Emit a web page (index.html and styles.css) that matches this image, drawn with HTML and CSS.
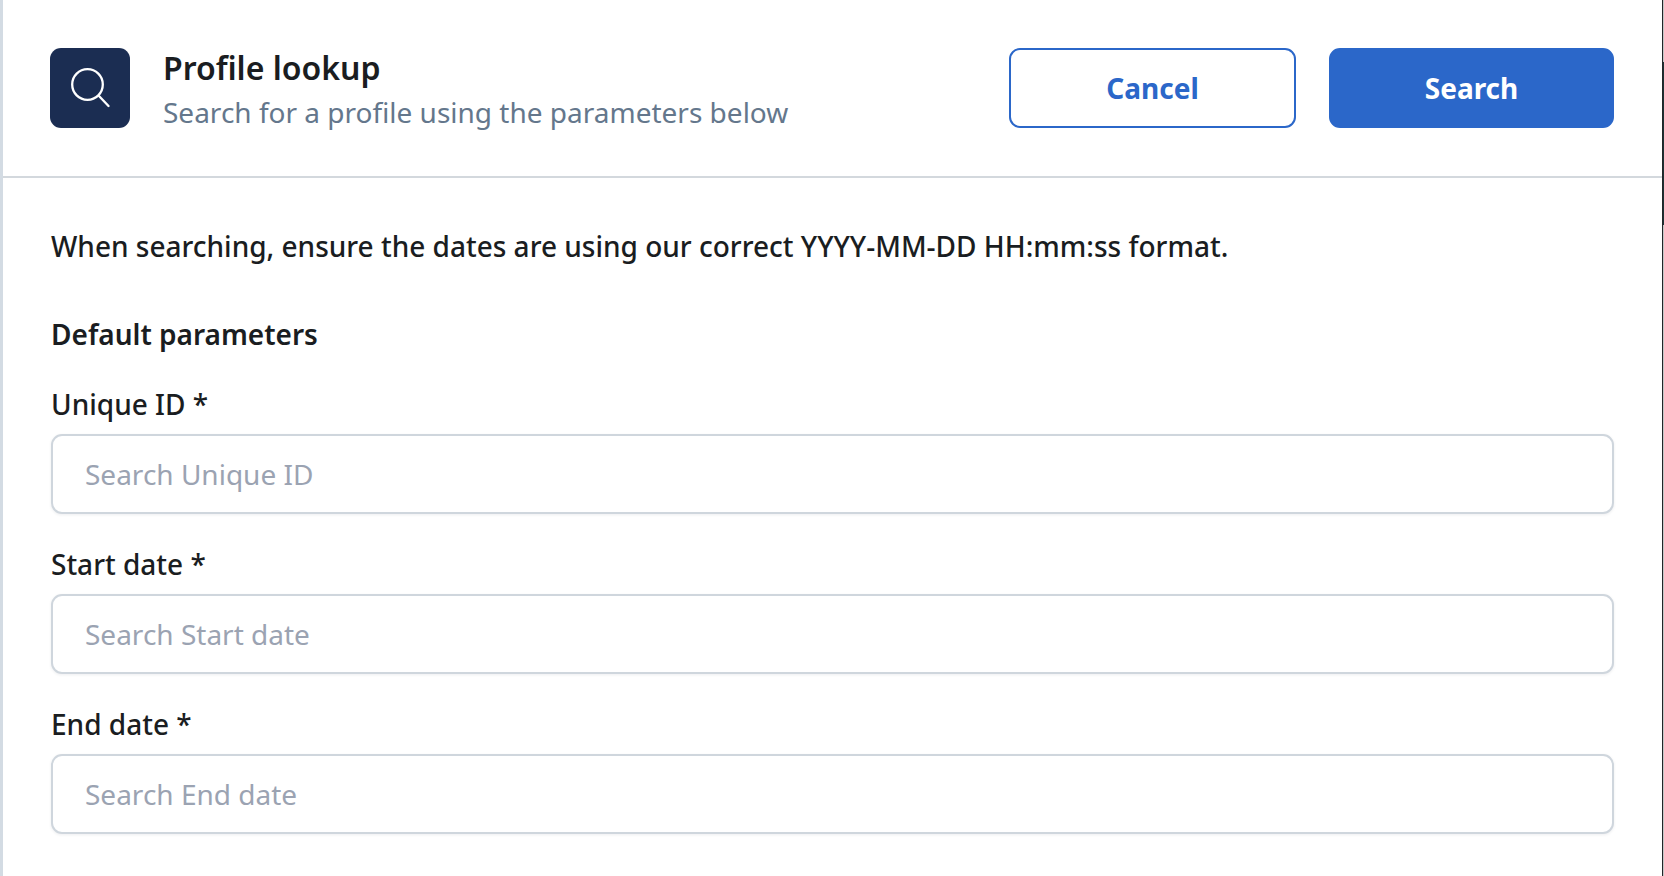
FILE: index.html
```html
<!DOCTYPE html>
<html lang="en">
<head>
<meta charset="utf-8">
<title>Profile lookup</title>
<link rel="stylesheet" href="styles.css">
</head>
<body>
<main class="panel">
  <span class="edge"></span>
  <header class="header">
    <div class="icon-box">
      <svg class="icon" viewBox="0 0 40 40" width="40" height="40" fill="none" stroke="#fff" stroke-width="2.300" stroke-linecap="round">
        <circle cx="17.500" cy="16.500" r="15.300"/>
        <path d="M29 28l9.500 10"/>
      </svg>
    </div>
    <div class="titles">
      <h1 class="title">Profile lookup</h1>
      <p class="subtitle">Search for a profile using the parameters below</p>
    </div>
    <div class="actions">
      <button class="btn btn-outline" type="button">Cancel</button>
      <button class="btn btn-solid" type="button">Search</button>
    </div>
  </header>
  <section class="content">
    <p class="note">When searching, ensure the dates are using our correct YYYY-MM-DD HH:mm:ss format.</p>
    <h2 class="group">Default parameters</h2>
    <div class="field">
      <label class="label" for="uid">Unique ID *</label>
      <input class="input" id="uid" placeholder="Search Unique ID">
    </div>
    <div class="field">
      <label class="label" for="start">Start date *</label>
      <input class="input" id="start" placeholder="Search Start date">
    </div>
    <div class="field">
      <label class="label" for="end">End date *</label>
      <input class="input" id="end" placeholder="Search End date">
    </div>
  </section>
</main>
</body>
</html>
```
FILE: styles.css
```css
* { box-sizing: border-box; }
html, body { margin: 0; height: 100%; background: #c6c6c6; overflow: hidden; }
body { font-family: "Noto Sans", sans-serif; color: #1a1d21; }
.panel { position: relative; width: 1663px; height: 876px; background: #fff; border-left: 3px solid #d3dbe3; border-right: 1px solid #222528; display: flex; flex-direction: column; }
.edge { position: absolute; top: 62px; right: -2px; width: 1px; height: 163px; background: #1d3234; }
.header { display: flex; align-items: center; height: 178px; padding: 0 48px 0 47px; border-bottom: 2px solid #d3d8dd; }
.icon-box { width: 80px; height: 80px; background: #1b2d52; border-radius: 11px; display: flex; align-items: center; justify-content: center; flex: none; }
.titles { margin-left: 33px; padding-top: 5px; flex: 1; }
.title { margin: 0; font-size: 32px; line-height: 44px; font-weight: 600; }
.subtitle { margin: 0; font-size: 28px; line-height: 45px; color: #64778c; }
.actions { display: flex; gap: 33px; }
.btn { width: 287px; height: 80px; border-radius: 11px; font: 700 28px "Noto Sans", sans-serif; border: 2px solid #2b67c9; }
.btn-outline { background: #fff; color: #2b67c9; }
.btn-solid { width: 285px; background: #2b67c9; color: #fff; }
.content { flex: 1; padding: 0 48px; background: #fff; }
.note { margin: 42px 0 0; font-size: 28px; line-height: 52px; font-weight: 500; }
.group { margin: 39px 0 0; font-size: 28px; line-height: 46px; font-weight: 600; }
.field { margin-top: 21px; }
.field + .field { margin-top: 24px; }
.label { display: block; font-size: 28px; line-height: 52px; font-weight: 500; height: 56px; }
.input { display: block; width: 100%; height: 80px; padding: 0 32px; border: 2px solid #cfd6dd; border-radius: 11px; font: 400 28px "Noto Sans", sans-serif; color: #1a1d21; background: #fff; box-shadow: 0 1px 3px rgba(30,40,60,.08); outline: none; }
.input::placeholder { color: #9ba3b2; opacity: 1; }
```
